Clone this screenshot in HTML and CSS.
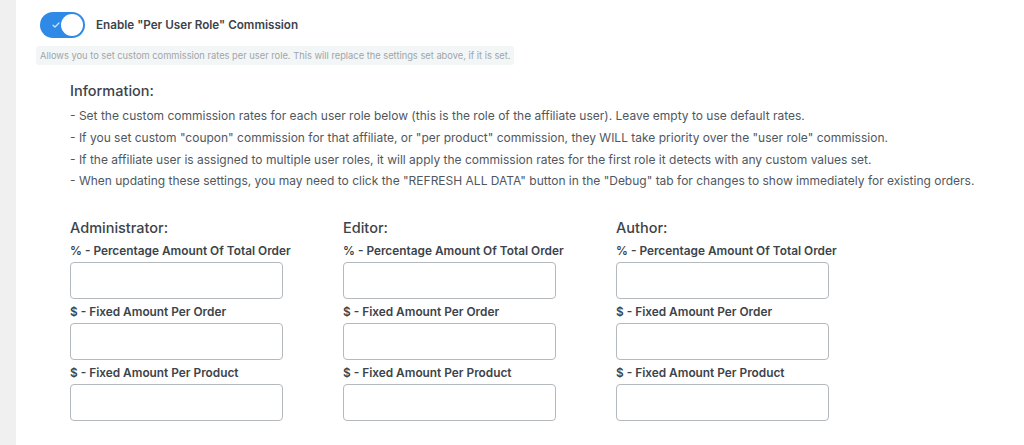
FILE: index.html
```html
<!DOCTYPE html>
<html lang="en">
<head>
<meta charset="utf-8">
<title>Per User Role Commission</title>
<link rel="stylesheet" href="styles.css">
</head>
<body>
	<div class="page">
		<div class="sidebar"></div>
		<div class="content">
			<div class="toggle-row">
				<label class="switch">
					<span class="switch-check">
						<svg width="8" height="6" viewBox="0 0 8 6"><path d="M1 3.2 L3 5 L7 1" fill="none" stroke="#cfe3fb" stroke-width="1.2" stroke-linecap="round" stroke-linejoin="round"/></svg>
					</span>
					<span class="switch-knob"></span>
				</label>
				<span class="toggle-title">Enable "Per User Role" Commission</span>
			</div>
			<div class="description">Allows you to set custom commission rates per user role. This will replace the settings set above, if it is set.</div>

			<div class="info">
				<h3 class="info-title">Information:</h3>
				<p>- Set the custom commission rates for each user role below (this is the role of the affiliate user). Leave empty to use default rates.</p>
				<p>- If you set custom "coupon" commission for that affiliate, or "per product" commission, they WILL take priority over the "user role" commission.</p>
				<p>- If the affiliate user is assigned to multiple user roles, it will apply the commission rates for the first role it detects with any custom values set.</p>
				<p>- When updating these settings, you may need to click the "REFRESH ALL DATA" button in the "Debug" tab for changes to show immediately for existing orders.</p>
			</div>

			<div class="roles">
				<div class="role">
					<h4 class="role-title">Administrator:</h4>
					<label class="field-label">% - Percentage Amount Of Total Order</label>
					<input type="text" class="field">
					<label class="field-label">$ - Fixed Amount Per Order</label>
					<input type="text" class="field">
					<label class="field-label">$ - Fixed Amount Per Product</label>
					<input type="text" class="field">
				</div>
				<div class="role">
					<h4 class="role-title">Editor:</h4>
					<label class="field-label">% - Percentage Amount Of Total Order</label>
					<input type="text" class="field">
					<label class="field-label">$ - Fixed Amount Per Order</label>
					<input type="text" class="field">
					<label class="field-label">$ - Fixed Amount Per Product</label>
					<input type="text" class="field">
				</div>
				<div class="role">
					<h4 class="role-title">Author:</h4>
					<label class="field-label">% - Percentage Amount Of Total Order</label>
					<input type="text" class="field">
					<label class="field-label">$ - Fixed Amount Per Order</label>
					<input type="text" class="field">
					<label class="field-label">$ - Fixed Amount Per Product</label>
					<input type="text" class="field">
				</div>
			</div>
		</div>
	</div>
</body>
</html>
```
FILE: styles.css
```css
html, body {
	margin: 0;
	padding: 0;
	background: #fff;
	font-family: Inter, "Liberation Sans", sans-serif;
	color: #3c434a;
}

.page {
	display: flex;
	min-height: 445px;
}

.sidebar {
	width: 16px;
	flex: none;
	background: #f0f0f1;
}

.content {
	flex: 1;
	padding: 12px 0 0 24px;
}

.toggle-row {
	display: flex;
	align-items: center;
	height: 26px;
}

.switch {
	position: relative;
	width: 45px;
	height: 26px;
	border-radius: 13px;
	background: #2e8ae6;
	flex: none;
}

.switch-check {
	position: absolute;
	left: 12px;
	top: 10px;
	line-height: 0;
}

.switch-knob {
	position: absolute;
	right: 2px;
	top: 2px;
	width: 22px;
	height: 22px;
	border-radius: 50%;
	background: #fff;
}

.toggle-title {
	margin-left: 11px;
	font-size: 11.7px;
	font-weight: 600;
	color: #3c434a;
}

.description {
	display: inline-block;
	margin: 8px 0 0 -4px;
	padding: 4px 4px;
	background: #f3f6f6;
	border-radius: 3px;
	font-size: 9.3px;
	color: #a0a5aa;
}

.info {
	padding: 17px 0 0 30px;
}

.info-title {
	margin: 0 0 6px;
	font-size: 14.5px;
	font-weight: 500;
	color: #3c434a;
}

.info p {
	margin: 0;
	font-size: 12px;
	line-height: 21.8px;
	color: #50575e;
}

.roles {
	display: flex;
	padding: 27px 0 0 30px;
}

.role {
	width: 273px;
	display: flex;
	flex-direction: column;
	align-items: flex-start;
}

.role-title {
	margin: 0 0 7px;
	font-size: 14.5px;
	font-weight: 500;
	color: #3c434a;
}

.field-label {
	font-size: 11.85px;
	font-weight: 600;
	color: #3c434a;
	line-height: 16px;
	margin-bottom: 3px;
}

.field {
	box-sizing: border-box;
	width: 213px;
	height: 37px;
	margin: 0 0 5px;
	border: 1px solid #b4b9be;
	border-radius: 4px;
	background: #fff;
	padding: 0 8px;
}
```
